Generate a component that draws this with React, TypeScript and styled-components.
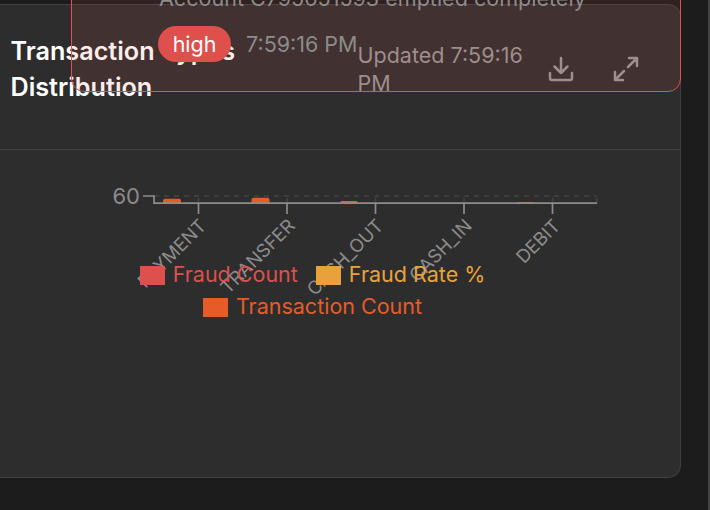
import React from 'react';
import styled, { createGlobalStyle } from 'styled-components';

const GlobalStyle = createGlobalStyle`
  * { box-sizing: border-box; }
  body { margin: 0; background: #1c1c1c; font-family: Inter, sans-serif; overflow: hidden; }
`;

const Page = styled.main`
  position: relative;
  width: 710px;
  height: 510px;
  overflow: hidden;
  padding-top: 4px;
  background: #1c1c1c;
  border-right: 2px solid #424242;
`;

const Card = styled.section`
  width: 681px;
  height: 474px;
  border: 1px solid #404040;
  border-left: 0;
  border-radius: 0 13px 13px 0;
  background: #2d2d2d;
`;

const Header = styled.header`
  display: flex;
  align-items: center;
  height: 145px;
  padding: 0 0 16px 10.5px;
  border-bottom: 1px solid #404040;
`;

const Title = styled.h3`
  flex: 0 0 347px;
  margin: 0;
  padding-right: 100px;
  color: #fff;
  font-size: 25.2px;
  font-weight: 600;
  line-height: 36px;
`;

const Updated = styled.span`
  flex: 0 0 171px;
  color: #969696;
  font-size: 21.5px;
  line-height: 28px;
`;

const IconButton = styled.button`
  display: grid;
  place-items: center;
  width: 65px;
  height: 48px;
  flex: none;
  margin: 0;
  padding: 0;
  border: 0;
  background: none;
  color: #969696;
`;

const Chart = styled.svg`
  display: block;
  height: 112px;
  width: 680px;
  overflow: visible;
`;

const AxisText = styled.text<{ $size?: number }>`
  fill: #8c8c8c;
  font-size: ${(p) => p.$size ?? 18.4}px;
`;

const Legend = styled.ul`
  display: flex;
  flex-wrap: wrap;
  justify-content: center;
  column-gap: 18px;
  position: relative;
  width: 400px;
  margin: -4px 0 0 112.5px;
  padding: 0;
  list-style: none;
`;

const LegendItem = styled.li<{ $color: string }>`
  display: flex;
  align-items: center;
  gap: 8px;
  height: 32px;
  color: ${(p) => p.$color};
  font-size: 21.5px;
  white-space: nowrap;

  &::before {
    content: '';
    width: 25px;
    height: 19px;
    margin-top: 2px;
    background: currentColor;
  }
`;

const Alert = styled.aside`
  position: absolute;
  top: -60px;
  left: 71px;
  width: 610px;
  height: 152px;
  padding: 42px 0 0 86px;
  border: 1px solid #df524d;
  border-radius: 13px;
  background: rgba(224, 82, 77, 0.11);
`;

const AlertMessage = styled.p`
  margin: 0 0 12px 1px;
  height: 31px;
  line-height: 31px;
  color: #8c8c8c;
  font-size: 21.55px;
  white-space: nowrap;
`;

const AlertMeta = styled.div`
  display: flex;
  align-items: center;
  gap: 15px;
  height: 36px;
`;

const Severity = styled.span`
  width: 73px;
  height: 36px;
  border-radius: 18px;
  background: #de504c;
  color: #fff;
  font-size: 21.45px;
  line-height: 36px;
  text-align: center;
`;

const Time = styled.time`
  color: #8c8c8c;
  font-size: 21.5px;
  white-space: nowrap;
`;

const ticks = [
  { label: 'PAYMENT', x: 198.5, bar: 4.3 },
  { label: 'TRANSFER', x: 287, bar: 5.2 },
  { label: 'CASH_OUT', x: 375.5, bar: 2 },
  { label: 'CASH_IN', x: 464, bar: 0 },
  { label: 'DEBIT', x: 552.5, bar: 0.9 },
];

const legend = [
  { label: 'Fraud Count', color: '#de504c' },
  { label: 'Fraud Rate %', color: '#e9a23b' },
  { label: 'Transaction Count', color: '#e65c28' },
];

const iconProps = {
  width: 26,
  height: 26,
  viewBox: '0 0 26 26',
  fill: 'none',
  stroke: 'currentColor',
  strokeWidth: 2.5,
  strokeLinecap: 'round' as const,
  strokeLinejoin: 'round' as const,
};

function barPath(center: number, height: number) {
  const r = Math.min(2, height);
  return `M${center - 9} 203v${r - height}q0 ${-r} 2 ${-r}h14q2 0 2 ${r}V203z`;
}

function TransactionChart() {
  return (
    <Chart viewBox="0 150 680 112">
      <g stroke="#444" strokeWidth="1.6" strokeDasharray="5 5">
        <path d="M154 196H597" />
        {ticks.map((t) => <path key={t.label} d={`M${t.x} 203V196`} />)}
        <path d="M597 203V196" />
      </g>
      {ticks.map((t) => t.bar > 0 && (
        <path key={t.label} fill="#e65c28" d={barPath(t.x - 26.5, t.bar)} />
      ))}
      <g fill="none" stroke="#8c8c8c" strokeWidth="1.7">
        <path d="M143 196H154V203.2H597" />
        {ticks.map((t) => <path key={t.label} d={`M${t.x} 203V214`} />)}
      </g>
      <AxisText x="140" y="204" textAnchor="end" $size={22}>60</AxisText>
      {ticks.map((t) => (
        <AxisText key={t.label} textAnchor="end" transform={`translate(${t.x + 9} 227) rotate(-45)`}>
          {t.label}
        </AxisText>
      ))}
    </Chart>
  );
}

export default function App() {
  return (
    <Page>
      <GlobalStyle />
      <Card>
        <Header>
          <Title>Transaction Types Distribution</Title>
          <Updated>Updated 7:59:16 PM</Updated>
          <IconButton aria-label="Download">
            <svg {...iconProps}>
              <path d="M13 2V17M6.5 10.5L13 17L19.5 10.5M2 17V22Q2 24 4 24H22Q24 24 24 22V17" />
            </svg>
          </IconButton>
          <IconButton aria-label="Expand">
            <svg {...iconProps}>
              <path d="M16 2H24V10M24 2L15 11M2 16V24H10M2 24L11 15" />
            </svg>
          </IconButton>
        </Header>
        <TransactionChart />
        <Legend>
          {legend.map((item) => (
            <LegendItem key={item.label} $color={item.color}>{item.label}</LegendItem>
          ))}
        </Legend>
      </Card>
      <Alert>
        <AlertMessage>Account C795651593 emptied completely</AlertMessage>
        <AlertMeta>
          <Severity>high</Severity>
          <Time>7:59:16 PM</Time>
        </AlertMeta>
      </Alert>
    </Page>
  );
}
